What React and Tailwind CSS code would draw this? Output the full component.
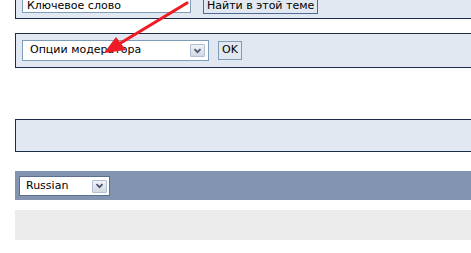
import React from 'react';

const font = { fontFamily: '"DejaVu Sans", Verdana, sans-serif' };

function DropButton({ className = '' }) {
  return (
    <div className={`flex items-center justify-center w-[15px] h-[13px] border border-[#b3c0d3] bg-gradient-to-b from-[#f1f3f7] to-[#d3d9e4] rounded-[1px] ${className}`}>
      <svg width="9" height="6" viewBox="0 0 9 6">
        <path d="M1.5 1.2 L4.5 4.2 L7.5 1.2" fill="none" stroke="#4a5670" strokeWidth="1.8" />
      </svg>
    </div>
  );
}

export default function App() {
  return (
    <div className="relative w-[471px] h-[253px] overflow-hidden bg-white text-[11px] text-black" style={font}>
      {/* search panel (top clipped) */}
      <div className="ml-[15px] -mt-[12px] flex items-start gap-[12px] pl-[6px] pt-[5px] pb-[4px] bg-[#e1e8f1] border border-r-0 border-[#1c2b47]">
        <div className="w-[169px] h-[19px] bg-white border border-[#7f9db9] flex items-end pl-[4px] pb-[1px] leading-none">Ключевое слово</div>
        <div className="h-[20px] px-[3px] flex items-end pb-[2px] leading-none border border-[#4d6b96] bg-[#e1e8f1]">Найти в этой теме</div>
      </div>

      {/* moderator options */}
      <div className="ml-[15px] mt-[14px] flex items-center gap-[9px] pl-[6px] py-[6px] bg-[#e1e8f1] border border-r-0 border-[#1c2b47]">
        <div className="w-[187px] h-[21px] bg-white border border-[#7f9db9] flex items-center justify-between pl-[7px] pr-[3px]">
          <span>Опции модератора</span>
          <DropButton />
        </div>
        <div className="h-[19px] px-[3px] flex items-center border border-[#7f9db9] bg-[#e1e8f1]">OK</div>
      </div>

      {/* empty panel */}
      <div className="ml-[15px] mt-[51px] h-[33px] bg-[#e1e8f1] border border-r-0 border-[#1c2b47]" />

      {/* language bar */}
      <div className="ml-[15px] mt-[19px] h-[29px] bg-[#8394b0] flex items-center pl-[4px] pt-[1px]">
        <div className="w-[91px] h-[20px] bg-white border border-[#5b6f92] flex items-center justify-between pl-[6px] pr-[2px]">
          <span>Russian</span>
          <DropButton />
        </div>
      </div>

      {/* footer bar */}
      <div className="ml-[15px] mt-[10px] h-[30px] bg-[#ececec]" />

      {/* red arrow */}
      <svg className="absolute left-0 top-0 pointer-events-none" width="471" height="253">
        <line x1="187" y1="3" x2="119" y2="44" stroke="#ee1c24" strokeWidth="3.2" strokeLinecap="round" />
        <polygon points="104,53 116,37 126,50" fill="#ee1c24" />
      </svg>
    </div>
  );
}
